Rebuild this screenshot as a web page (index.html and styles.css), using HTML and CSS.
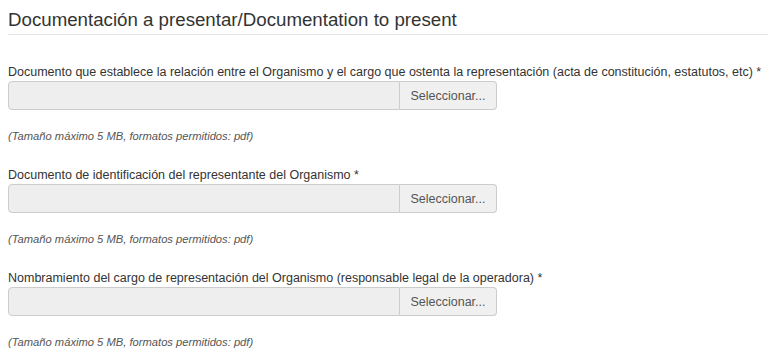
FILE: index.html
```html
<!DOCTYPE html>
<html lang="es">
  <head>
    <meta charset="UTF-8">
    <title>Documentación a presentar</title>
    <link rel="stylesheet" href="styles.css">
  </head>
  <body>
    <fieldset class="docs">
      <h3 class="legend">Documentación a presentar/Documentation to present</h3>

      <div class="field">
        <label>Documento que establece la relación entre el Organismo y el cargo que ostenta la representación (acta de constitución, estatutos, etc) *</label>
        <div class="file-row">
          <div class="file-name"></div>
          <span class="file-btn">Seleccionar...</span>
        </div>
        <p class="help">(Tamaño máximo 5 MB, formatos permitidos: pdf)</p>
      </div>

      <div class="field">
        <label>Documento de identificación del representante del Organismo *</label>
        <div class="file-row">
          <div class="file-name"></div>
          <span class="file-btn">Seleccionar...</span>
        </div>
        <p class="help">(Tamaño máximo 5 MB, formatos permitidos: pdf)</p>
      </div>

      <div class="field">
        <label>Nombramiento del cargo de representación del Organismo (responsable legal de la operadora) *</label>
        <div class="file-row">
          <div class="file-name"></div>
          <span class="file-btn">Seleccionar...</span>
        </div>
        <p class="help">(Tamaño máximo 5 MB, formatos permitidos: pdf)</p>
      </div>
    </fieldset>
  </body>
</html>
```

FILE: styles.css
```css
* {
  box-sizing: border-box;
}
body {
  margin: 0;
  background: #fff;
  color: #333;
  font-family: "Liberation Sans", Arial, sans-serif;
}
.docs {
  margin: 0;
  padding: 0 0 0 8px;
  border: 0;
}
.legend {
  margin: 9px 0 0;
  padding-bottom: 3px;
  font-size: 18.7px;
  font-weight: normal;
  line-height: 22px;
  border-bottom: 1px solid #e5e5e5;
}
.field {
  margin-top: 29px;
}
.field + .field {
  margin-top: 24px;
}
.field label {
  display: block;
  font-size: 12.5px;
  line-height: 17px;
}
.file-row {
  display: flex;
  width: 489px;
  height: 29px;
}
.file-name {
  flex: 1;
  background: #eee;
  border: 1px solid #ccc;
  border-radius: 4px 0 0 4px;
}
.file-btn {
  display: flex;
  align-items: center;
  justify-content: center;
  width: 97px;
  background: #f0f0f0;
  border: 1px solid #ccc;
  border-left: 0;
  border-radius: 0 4px 4px 0;
  color: #555;
  font-size: 12.5px;
}
.help {
  margin: 19px 0 0;
  font-size: 11.2px;
  font-style: italic;
  line-height: 14px;
  color: #555;
}
```
